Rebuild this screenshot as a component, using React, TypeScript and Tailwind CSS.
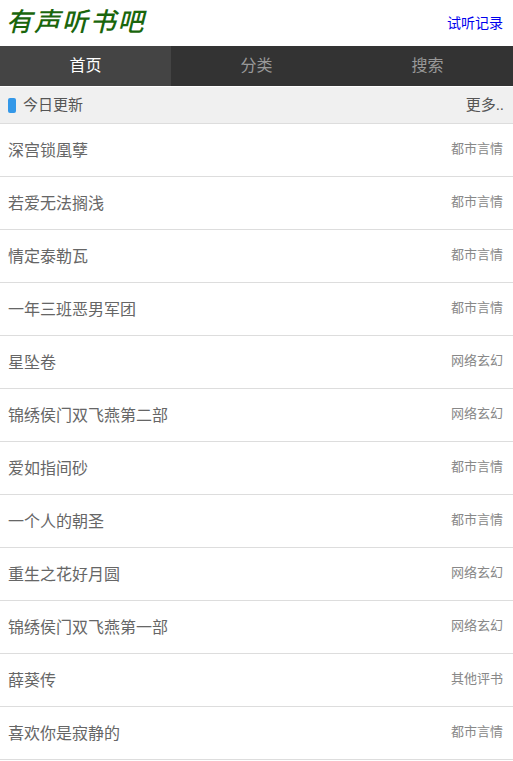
const rows: [string, string][] = [
  ["深宫锁凰孽", "都市言情"],
  ["若爱无法搁浅", "都市言情"],
  ["情定泰勒瓦", "都市言情"],
  ["一年三班恶男军团", "都市言情"],
  ["星坠卷", "网络玄幻"],
  ["锦绣侯门双飞燕第二部", "网络玄幻"],
  ["爱如指间砂", "都市言情"],
  ["一个人的朝圣", "都市言情"],
  ["重生之花好月圆", "网络玄幻"],
  ["锦绣侯门双飞燕第一部", "网络玄幻"],
  ["薛葵传", "其他评书"],
  ["喜欢你是寂静的", "都市言情"],
];

export default function App() {
  return (
    <div className="h-[761px] overflow-hidden bg-white font-['Liberation_Sans','Noto_Sans_CJK_SC',sans-serif]">
      <header className="flex h-[46px] items-center justify-between pl-[6px] pr-[10px]">
        <h1 className="mb-[2px] text-[26px] font-medium italic leading-[44px] tracking-[1.9px] text-[#1a660c]">有声听书吧</h1>
        <a className="text-[14px] text-[#0000ee]">试听记录</a>
      </header>
      <nav className="grid h-[40px] grid-cols-3 bg-[#333333] text-center text-[16px] leading-[40px] text-[#999999]">
        <div className="bg-[#444444] text-white">首页</div>
        <div>分类</div>
        <div>搜索</div>
      </nav>
      <div className="mt-[1px] flex h-[37px] items-center justify-between border-b border-[#dddddd] bg-[#f0f0f0] pl-2 pr-[9px] text-[15px] text-[#555555]">
        <div className="flex items-center gap-[7px]">
          <span className="h-[15px] w-[8px] rounded-[2px] bg-[#3498e8]" />
          <span>今日更新</span>
        </div>
        <span>更多..</span>
      </div>
      <ul>
        {rows.map(([name, cat]) => (
          <li key={name} className="flex h-[53px] items-center justify-between border-b border-[#dddddd] pl-2 pr-[10px]">
            <span className="mt-[2px] text-[16px] text-[#666666]">{name}</span>
            <span className="mb-[2px] text-[13px] text-[#888888]">{cat}</span>
          </li>
        ))}
      </ul>
    </div>
  );
}
